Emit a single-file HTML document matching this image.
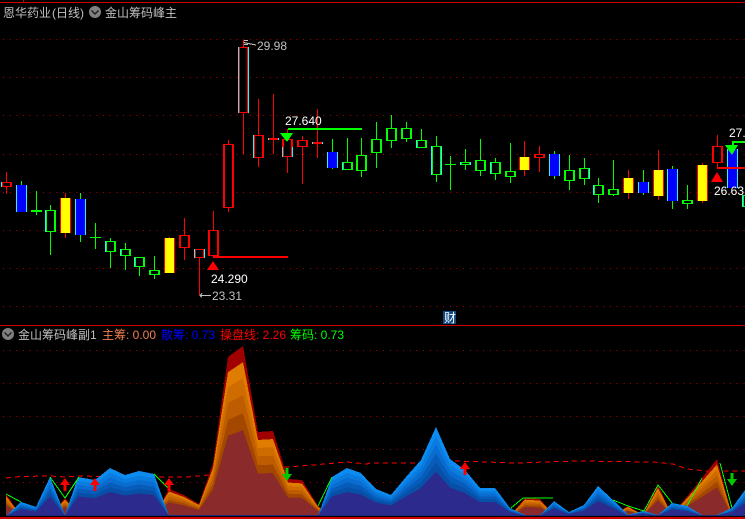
<!DOCTYPE html>
<html>
<head>
<meta charset="utf-8">
<style>
html,body{margin:0;padding:0;background:#000;width:745px;height:519px;overflow:hidden}
svg{display:block;position:absolute;left:0;top:0}
text{font-family:"Liberation Sans","WenQuanYi Zen Hei","Noto Sans CJK SC",sans-serif;font-size:12px}
</style>
</head>
<body>
<svg width="745" height="519" viewBox="0 0 745 519" xmlns="http://www.w3.org/2000/svg">
<defs>
<polygon id="o" points="6,0 6,-22 21,0 50,0 65,-18 80,0 154,0 169,-27 184,-21 199,-12 213,-53 228,-159 243,-170 258,-84 273,-85 288,-37 302,-36 318,-10 332,0 510,0 525,-18 540,-17 554,-1 613,-1 628,-10 643,-1 658,-31 672,-1 702,-38 717,-57 732,-1 732,0"/>
<polygon id="b" points="6,0 21,-14 36,-9 50,-39 65,-1 78,-39 95,-36 110,-48 125,-41 139,-45 154,-42 169,0 318,0 332,-39 347,-48 361,-43 370,-33 376,-27 391,-21 406,-39 421,-56 436,-89 450,-57 465,-46 480,-28 495,-28 510,-8 525,-1 540,-1 554,-15 569,-4 584,-11 598,-30 613,-16 628,-1 643,-5 658,-1 672,-13 687,-10 702,-1 717,-1 732,-8 745,-26 745,0"/>
</defs>
<rect width="745" height="519" fill="#000"/>

<g shape-rendering="crispEdges">
<path d="M0 2.500H745M23.500 0V2M0 325.500H745" stroke="#d00000" fill="none"/>
<path d="M0 517H745V519H0Z" fill="#d00000"/>
<path d="M3 39.500H745M3 77.500H745M3 115.500H745M3 154.500H745M3 192.500H745M3 230.500H745M3 268.500H745M3 306.500H745M3 350.500H745M3 383.500H745M3 416.500H745M3 449.500H745M3 482.500H745" stroke="#b00000" stroke-dasharray="1 5.670" fill="none"/>

<!-- wicks -->
<path fill="none" stroke="#ff0000" d="M6.500 172V194M65.500 193V238M169.500 237V240M184.500 218V260M199.500 249V295M213.500 211V232M228.500 140V212M243.500 40V154M258.500 99V167M273.500 94V154M287.500 129V173M302.500 136V184M317.500 109V158M524.500 141V176M539.500 146V172M628.500 170V199M658.500 150V200M702.500 163V203M717.500 135V168"/>
<path fill="none" stroke="#00ff00" d="M21.500 181V212M36.500 191V215M50.500 205V255M80.500 193V242M95.500 223V249M110.500 238V268M125.500 243V270M139.500 257V276M154.500 256V279M332.500 139V169M347.500 138V170M361.500 138V177M376.500 122V168M391.500 115V148M406.500 122V142M421.500 129V148M436.500 136V182M450.500 156V190M465.500 149V170M480.500 139V176M495.500 158V180M510.500 143V183M554.500 151V179M569.500 155V190M584.500 158V185M598.500 178V203M613.500 160V196M643.500 170V195M672.500 166V209M687.500 185V209M732.500 141V149"/>

<!-- red outline bodies -->
<path fill="#ff0000" d="M1 182h11v5h-11zM179 235h11v13h-11zM194 249h11v9h-11zM208 230h11v26h-11zM223 144h11v64h-11zM238 47h11v66h-11zM253 135h11v23h-11zM268 138h11v2h-11zM282 139h11v18h-11zM297 140h11v7h-11zM312 142h11v2h-11zM534 154h11v4h-11zM712 146h11v17h-11z"/>
<!-- green outline bodies -->
<path fill="#00ff00" d="M31 210h11v2h-11zM45 210h11v22h-11zM90 237h11v1h-11zM105 241h11v11h-11zM120 249h11v7h-11zM134 257h11v10h-11zM149 270h11v5h-11zM342 162h11v8h-11zM356 155h11v16h-11zM371 139h11v14h-11zM386 128h11v13h-11zM401 128h11v11h-11zM416 140h11v8h-11zM431 146h11v29h-11zM445 164h11v1h-11zM460 162h11v3h-11zM475 160h11v11h-11zM490 162h11v12h-11zM505 171h11v6h-11zM564 170h11v11h-11zM579 168h11v11h-11zM593 185h11v10h-11zM608 189h11v6h-11zM682 200h11v4h-11zM742 195h11v12h-11z"/>
<!-- hollow interiors -->
<path fill="#000" d="M3 183h7v3h-7zM181 236h7v11h-7zM196 250h7v7h-7zM210 231h7v24h-7zM225 145h7v62h-7zM240 48h7v64h-7zM255 136h7v21h-7zM284 140h7v16h-7zM299 141h7v5h-7zM536 155h7v2h-7zM714 147h7v15h-7zM47 211h7v20h-7zM107 242h7v9h-7zM122 250h7v5h-7zM136 258h7v8h-7zM151 271h7v3h-7zM344 163h7v6h-7zM358 156h7v14h-7zM373 140h7v12h-7zM388 129h7v11h-7zM403 129h7v9h-7zM418 141h7v6h-7zM433 147h7v27h-7zM462 163h7v1h-7zM477 161h7v9h-7zM492 163h7v10h-7zM507 172h7v4h-7zM566 171h7v9h-7zM581 169h7v9h-7zM595 186h7v8h-7zM610 190h7v4h-7zM684 201h7v2h-7zM744 196h7v10h-7z"/>
<!-- cyan edges on hollow bodies -->
<path fill="#30f0f8" d="M1 182h1v5h-1zM194 249h1v9h-1zM204 249h1v9h-1zM238 47h1v66h-1zM248 47h1v66h-1zM253 135h1v23h-1zM268 138h1v2h-1zM278 138h1v2h-1zM282 147h1v10h-1zM292 147h1v10h-1zM312 142h1v2h-1zM322 142h1v2h-1zM45 210h1v22h-1zM105 241h1v11h-1zM120 249h1v7h-1zM134 257h1v10h-1zM342 162h1v8h-1zM431 146h1v29h-1zM441 146h1v29h-1zM416 140h1v8h-1zM490 162h1v12h-1zM460 162h1v3h-1zM470 162h1v3h-1zM589 168h1v11h-1zM593 185h1v10h-1zM742 195h1v12h-1z"/>

<!-- yellow bodies -->
<path fill="#ff0000" d="M60 198h11v35h-11zM164 238h11v35h-11zM519 157h11v13h-11zM623 178h11v15h-11zM653 170h11v26h-11zM697 165h11v36h-11z"/>
<path fill="#ffff00" d="M61 198h9v35h-9zM165 238h9v35h-9zM520 157h9v13h-9zM624 178h9v15h-9zM654 170h9v26h-9zM698 165h9v36h-9z"/>
<!-- blue bodies -->
<path fill="#30f0f8" d="M16 185h11v27h-11zM75 199h11v36h-11zM327 152h11v16h-11zM549 154h11v22h-11zM638 182h11v11h-11zM667 169h11v32h-11zM727 149h11v39h-11z"/>
<path fill="#0000ff" d="M17 185h9v27h-9zM76 199h9v36h-9zM328 152h9v16h-9zM550 154h9v22h-9zM639 182h9v11h-9zM668 169h9v32h-9zM728 149h9v39h-9z"/>

<!-- horizontal markers -->
<rect x="288" y="128" width="74" height="2" fill="#00ff00"/>
<rect x="213" y="256" width="75" height="2" fill="#ff0000"/>
<rect x="717" y="167" width="28" height="2" fill="#ff0000"/>
<path d="M732 148V141H745V143H734V148Z" fill="#00ff00"/>
<polygon points="280,133 293,133 287,142" fill="#00ff00"/>
<polygon points="725,145 738,145 732,155" fill="#00ff00"/>
<polygon points="207,270 219,270 213,261" fill="#ff0000"/>
<polygon points="711,182 723,182 717,172" fill="#ff0000"/>

<!-- 财 tag -->
<rect x="443" y="311" width="13" height="13" fill="#104a80"/>
</g>

<text x="444" y="322" fill="#ffffff">财</text>

<!-- sub pane layers -->
<g shape-rendering="crispEdges">
<path fill="none" stroke="#ff0000" stroke-dasharray="5 4" d="M6 478L21 476.500L50 476L65 477L80 476L100 476.500L160 477L187 477L208 475L287 467L313 465L347 462L367 464L370 463L420 463L456 461L516 463L546 462L576 461L653 462L673 464L687 469L707 471L745 471"/>
<g transform="translate(0,516)">
<use href="#o" fill="#a00000"/>
<use href="#o" fill="#e07c00" transform="scale(1,.905)"/>
<use href="#o" fill="#cf6c00" transform="scale(1,.81)"/>
<use href="#o" fill="#bd5c00" transform="scale(1,.71)"/>
<use href="#o" fill="#a44800" transform="scale(1,.605)"/>
<use href="#o" fill="#8b2a2a" transform="scale(1,.505)"/>
<use href="#b" fill="#0c8cf0"/>
<use href="#b" fill="#0a7ce0" transform="scale(1,.9)"/>
<use href="#b" fill="#086cd0" transform="scale(1,.8)"/>
<use href="#b" fill="#065cb8" transform="scale(1,.7)"/>
<use href="#b" fill="#0650a8" transform="scale(1,.6)"/>
<use href="#b" fill="#2c2a8c" transform="scale(1,.5)"/>
</g>
<rect x="6" y="515" width="739" height="1" fill="#1a2a80"/>
</g>

<!-- green connectors -->
<g fill="none" stroke="#00ff00" stroke-width="1" shape-rendering="crispEdges">
<path d="M6 494L21 502M50 477L65 498L79 477M154 474L169 489M318 506L332 477M511 508L523 498H553M613 500L628 506L644 511L658 485L672 503M687 506L702 478M720 463L732 508"/>
</g>

<!-- arrows -->
<g shape-rendering="crispEdges">
<path fill="#ff0000" d="M60 485L65 478L70 485H66.500V491H63.500V485ZM90 485L95 478L100 485H96.500V491H93.500V485ZM164 485L169 478L174 485H170.500V491H167.500V485ZM460 469L465 462L470 469H466.500V475H463.500V469Z"/>
<path fill="#00c800" d="M282 474H285.500V468H288.500V474H292L287 481ZM727 479H730.500V473H733.500V479H737L732 486Z"/>
</g>

<!-- price labels -->
<text x="285" y="125" fill="#ffffff">27.640</text>
<text x="211" y="283" fill="#ffffff">24.290</text>
<text x="729" y="137" fill="#ffffff">27.</text>
<text x="714" y="195" fill="#ffffff">26.63</text>
<text x="257" y="50" fill="#c0c0c0">29.98</text>
<text x="212" y="300" fill="#c0c0c0">23.31</text>
<path d="M244 40.500H248M243.500 42.500L256 45M244 44.500H248" stroke="#c0c0c0" fill="none" shape-rendering="crispEdges"/>
<path d="M200 295.500H211M202 293.500L200 295.500L202 297.500" stroke="#c0c0c0" fill="none" shape-rendering="crispEdges"/>

<!-- headers -->
<text x="3" y="17" fill="#c0c0c0">恩华药业</text>
<text x="52" y="17" fill="#c0c0c0">(日线)</text>
<circle cx="95" cy="12" r="6" fill="#808080"/>
<path d="M91.500 10.500L95 14L98.500 10.500" fill="none" stroke="#222" stroke-width="1.500"/>
<text x="105" y="17" fill="#c0c0c0">金山筹码峰主</text>

<circle cx="8" cy="334" r="6" fill="#808080"/>
<path d="M4.500 332.500L8 336L11.500 332.500" fill="none" stroke="#222" stroke-width="1.500"/>
<text x="18" y="339" fill="#c0c0c0">金山筹码峰副1</text>
<text x="102" y="339" fill="#f08050">主筹: 0.00</text>
<text x="161" y="339" fill="#0000ff">散筹: 0.73</text>
<text x="220" y="339" fill="#ff0000">操盘线: 2.26</text>
<text x="290" y="339" fill="#00ff00">筹码: 0.73</text>
</svg>
</body>
</html>
